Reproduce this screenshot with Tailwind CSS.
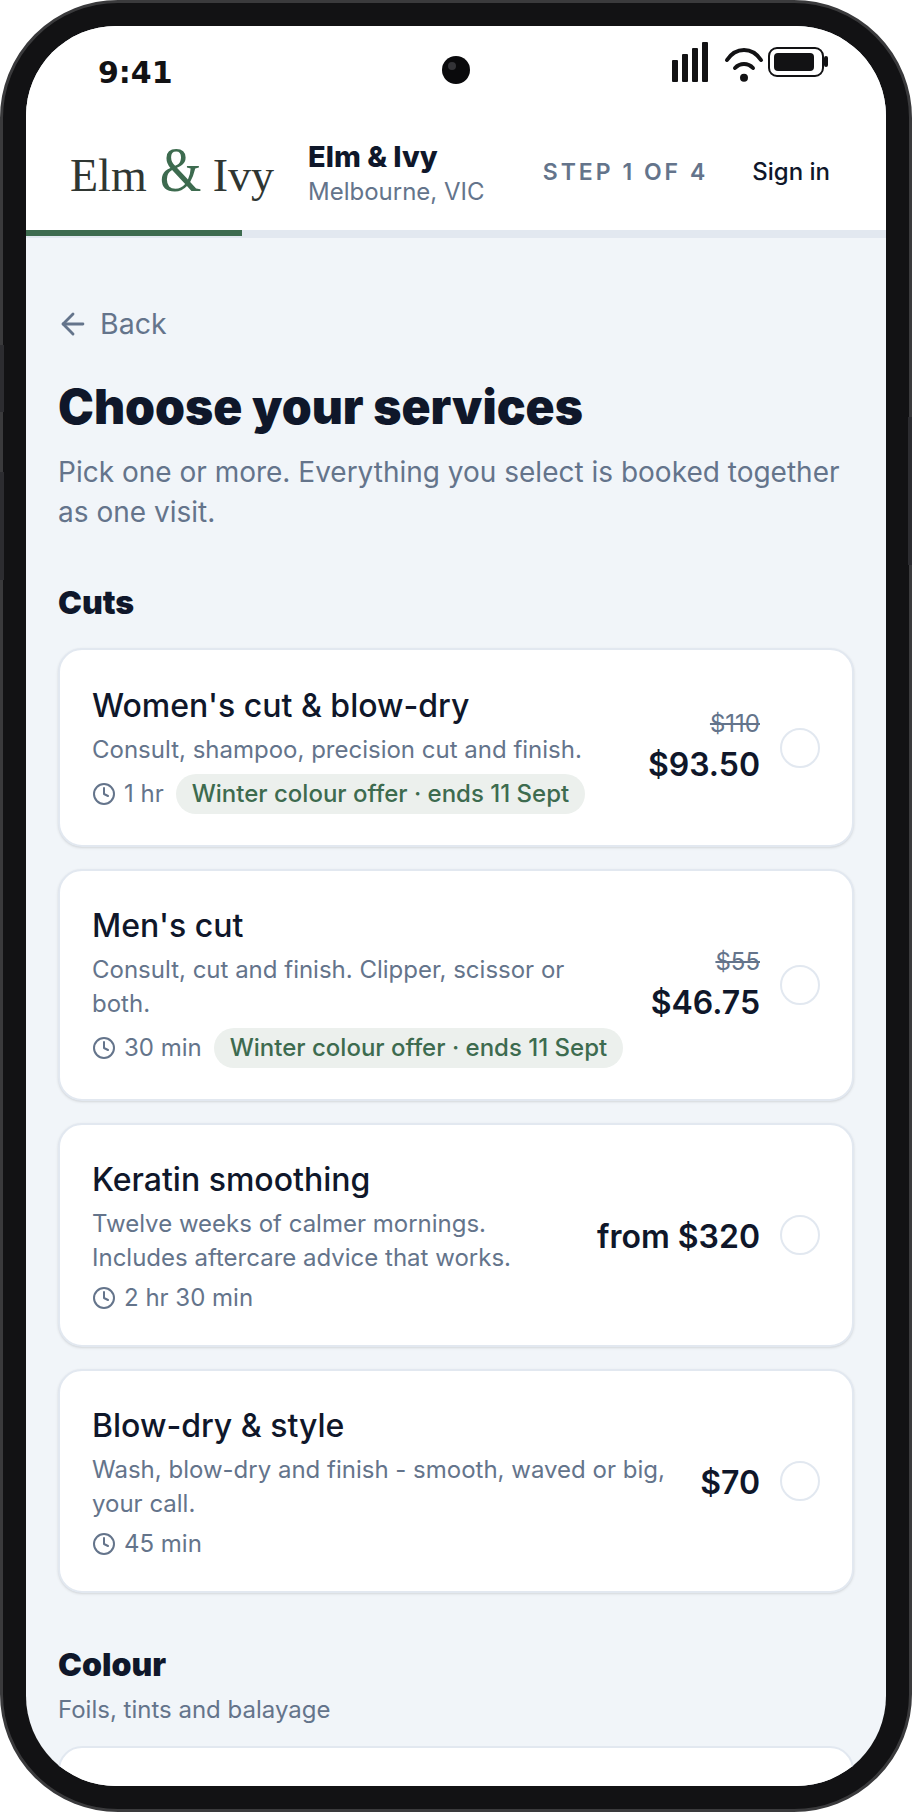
<!DOCTYPE html>
<html lang="en">
<head>
  <meta charset="UTF-8" />
  <meta name="viewport" content="width=device-width, initial-scale=1" />
  <title>Choose your services</title>
  <script src="https://cdn.jsdelivr.net/npm/@tailwindcss/browser@4"></script>
</head>
<body class="bg-white font-['Inter',sans-serif] text-[#0f172a]">
  <!-- Phone frame -->
  <div class="relative w-[912px] h-[1812px] rounded-[118px] border-[3px] border-[#3a3a3c] bg-[#121214] p-[23px]">
    <!-- Side buttons -->
    <div class="absolute -left-[3px] top-[342px] w-[4px] h-[67px] bg-[#2c2c30]"></div>
    <div class="absolute -left-[3px] top-[469px] w-[4px] h-[108px] bg-[#2c2c30]"></div>
    <div class="absolute -right-[3px] top-[414px] w-[4px] h-[148px] bg-[#2c2c30]"></div>

    <div class="w-[860px] h-[1760px] rounded-[90px] overflow-hidden bg-[#f1f5f9] flex flex-col relative">

      <!-- Status bar -->
      <div class="h-[92px] shrink-0 bg-white flex items-start justify-between pl-[72px] pr-[58px]">
        <span class="mt-[29px] font-['DejaVu_Sans',sans-serif] font-bold text-[30px] leading-[36px] text-[#121214]">9:41</span>
        <div class="flex items-start mt-[16px]">
          <svg width="36" height="40" viewBox="0 0 36 40" fill="#121214">
            <rect x="0" y="18" width="6" height="22" rx="1" /><rect x="10" y="12" width="6" height="28" rx="1" /><rect x="20" y="6" width="6" height="34" rx="1" /><rect x="30" y="0" width="6" height="40" rx="1" />
          </svg>
          <svg class="ml-[16px]" width="40" height="40" viewBox="0 0 40 40" fill="none" stroke="#121214" stroke-width="4" stroke-linecap="round">
            <path d="M3 18C12 4.7 28 4.7 37 18" /><path d="M11 26C16 20.7 24 20.7 29 26" /><circle cx="20" cy="35.7" r="4" fill="#121214" stroke="none" />
          </svg>
          <svg class="ml-[4px] mt-[5px]" width="60" height="30" viewBox="0 0 60 30">
            <rect x="1" y="1" width="54" height="28" rx="8" fill="none" stroke="#121214" stroke-width="2" />
            <rect x="6" y="6" width="40" height="18" rx="4" fill="#121214" />
            <rect x="56" y="9" width="4" height="11" rx="2" fill="#121214" />
          </svg>
        </div>
        <!-- Camera -->
        <div class="absolute left-[416px] top-[30px] w-[28px] h-[28px] rounded-full bg-[#0a0a0c]">
          <div class="absolute left-[6px] top-[6px] w-[8px] h-[8px] rounded-full bg-[#333337]"></div>
        </div>
      </div>

      <!-- Header -->
      <header class="h-[112px] shrink-0 bg-white flex items-center pl-[44px] pr-[56px]">
        <div class="w-[204px] mb-[8px] font-['Liberation_Serif',serif] text-[46px] leading-none text-[#2f3632] whitespace-nowrap">Elm <span class="inline-block -ml-[2px] -mr-[4px] scale-x-[0.85] text-[#3d6b4f] text-[63px] leading-none">&amp;</span> Ivy</div>
        <div class="ml-[34px] flex flex-col">
          <span class="font-extrabold text-[29px] leading-[34px] text-[#0f172a]">Elm &amp; Ivy</span>
          <span class="text-[24px] leading-[34px] mt-[1px] text-[#64748b]">Melbourne, VIC</span>
        </div>
        <span class="ml-auto mb-[4px] font-semibold text-[23px] tracking-[3px] text-[#64748b]">STEP 1 OF 4</span>
        <span class="ml-[44px] mb-[4px] font-medium text-[24px] text-[#0f172a]">Sign in</span>
      </header>

      <!-- Progress -->
      <div class="h-[8px] shrink-0 bg-[#e2e8f0]"><div class="h-[6px] w-[216px] bg-[#3d6b4f]"></div></div>

      <main class="flex-1 px-[32px] pt-[68px]">
        <div class="flex items-center gap-[10px] h-[36px] text-[#64748b] text-[28.5px]">
          <svg class="-ml-[2px]" width="34" height="34" viewBox="0 0 24 24" fill="none" stroke="currentColor" stroke-width="2" stroke-linecap="round" stroke-linejoin="round"><path d="M19 12H5" /><path d="M12 19l-7-7 7-7" /></svg>
          <span>Back</span>
        </div>

        <h1 class="mt-[35px] font-black text-[48px] leading-[60px] text-[#0f172a]">Choose your services</h1>
        <p class="mt-[15px] text-[28px] leading-[40px] text-[#64748b]">Pick one or more. Everything you select is booked together as one visit.</p>

        <h2 class="mt-[51px] font-black text-[32px] leading-[40px] text-[#0f172a]">Cuts</h2>

        <div class="mt-[25px] flex flex-col gap-[22px]">
          <!-- Women's cut -->
          <div class="h-[199px] bg-white rounded-[24px] border-2 border-[#e2e8f0] shadow-sm flex items-center gap-[24px] px-[32px]">
            <div class="flex-1 min-w-0 pt-[5px]">
              <h3 class="font-medium text-[32px] leading-[40px]">Women's cut &amp; blow-dry</h3>
              <p class="mt-[7px] text-[24px] leading-[34px] text-[#64748b]">Consult, shampoo, precision cut and finish.</p>
              <div class="mt-[7px] flex items-center gap-[12px] text-[24px] text-[#64748b]">
                <div class="flex items-center gap-[8px]">
                  <svg width="24" height="24" viewBox="0 0 24 24" fill="none" stroke="currentColor" stroke-width="2" stroke-linecap="round" stroke-linejoin="round"><circle cx="12" cy="12" r="10" /><path d="M12 6v6l4 2" /></svg>
                  <span>1 hr</span>
                </div>
                <span class="h-[40px] px-[16px] rounded-full bg-[#ecf0ed] text-[#3d6b4f] font-medium flex items-center whitespace-nowrap">Winter colour offer · ends 11 Sept</span>
              </div>
            </div>
            <div class="flex flex-col items-end mb-[1px] -ml-[24px]">
              <span class="text-[24px] leading-[30px] line-through text-[#64748b]">$110</span>
              <span class="mt-[6px] font-semibold text-[32px] leading-[40px]">$93.50</span>
            </div>
            <div class="-ml-[4px] w-[40px] h-[40px] rounded-full border-2 border-[#e2e8f0] shrink-0"></div>
          </div>

          <!-- Men's cut -->
          <div class="h-[232px] bg-white rounded-[24px] border-2 border-[#e2e8f0] shadow-sm flex items-center gap-[24px] px-[32px]">
            <div class="flex-1 min-w-0 pt-[3px]">
              <h3 class="font-medium text-[32px] leading-[40px]">Men's cut</h3>
              <p class="mt-[7px] text-[24px] leading-[34px] text-[#64748b]">Consult, cut and finish. Clipper, scissor or both.</p>
              <div class="mt-[7px] flex items-center gap-[12px] text-[24px] text-[#64748b]">
                <div class="flex items-center gap-[8px]">
                  <svg width="24" height="24" viewBox="0 0 24 24" fill="none" stroke="currentColor" stroke-width="2" stroke-linecap="round" stroke-linejoin="round"><circle cx="12" cy="12" r="10" /><path d="M12 6v6l4 2" /></svg>
                  <span>30 min</span>
                </div>
                <span class="h-[40px] px-[16px] rounded-full bg-[#ecf0ed] text-[#3d6b4f] font-medium flex items-center whitespace-nowrap">Winter colour offer · ends 11 Sept</span>
              </div>
            </div>
            <div class="flex flex-col items-end mb-[1px]">
              <span class="text-[24px] leading-[30px] line-through text-[#64748b]">$55</span>
              <span class="mt-[6px] font-semibold text-[32px] leading-[40px]">$46.75</span>
            </div>
            <div class="-ml-[4px] w-[40px] h-[40px] rounded-full border-2 border-[#e2e8f0] shrink-0"></div>
          </div>

          <!-- Keratin -->
          <div class="h-[224px] bg-white rounded-[24px] border-2 border-[#e2e8f0] shadow-sm flex items-center gap-[24px] px-[32px]">
            <div class="flex-1 min-w-0 pt-[3px]">
              <h3 class="font-medium text-[32px] leading-[40px]">Keratin smoothing</h3>
              <p class="mt-[7px] text-[24px] leading-[34px] text-[#64748b]">Twelve weeks of calmer mornings. Includes aftercare advice that works.</p>
              <div class="mt-[7px] flex items-center gap-[8px] h-[32px] text-[24px] text-[#64748b]">
                <svg width="24" height="24" viewBox="0 0 24 24" fill="none" stroke="currentColor" stroke-width="2" stroke-linecap="round" stroke-linejoin="round"><circle cx="12" cy="12" r="10" /><path d="M12 6v6l4 2" /></svg>
                <span>2 hr 30 min</span>
              </div>
            </div>
            <span class="-ml-[2px] mt-[3px] font-semibold text-[32px] leading-[40px]">from $320</span>
            <div class="-ml-[4px] w-[40px] h-[40px] rounded-full border-2 border-[#e2e8f0] shrink-0"></div>
          </div>

          <!-- Blow-dry -->
          <div class="h-[224px] bg-white rounded-[24px] border-2 border-[#e2e8f0] shadow-sm flex items-center gap-[24px] px-[32px]">
            <div class="flex-1 min-w-0 pt-[3px]">
              <h3 class="font-medium text-[32px] leading-[40px]">Blow-dry &amp; style</h3>
              <p class="mt-[7px] text-[24px] leading-[34px] text-[#64748b]">Wash, blow-dry and finish - smooth, waved or big, your call.</p>
              <div class="mt-[7px] flex items-center gap-[8px] h-[32px] text-[24px] text-[#64748b]">
                <svg width="24" height="24" viewBox="0 0 24 24" fill="none" stroke="currentColor" stroke-width="2" stroke-linecap="round" stroke-linejoin="round"><circle cx="12" cy="12" r="10" /><path d="M12 6v6l4 2" /></svg>
                <span>45 min</span>
              </div>
            </div>
            <span class="mt-[3px] font-semibold text-[32px] leading-[40px]">$70</span>
            <div class="-ml-[4px] w-[40px] h-[40px] rounded-full border-2 border-[#e2e8f0] shrink-0"></div>
          </div>
        </div>

        <h2 class="mt-[52px] font-black text-[32px] leading-[40px] text-[#0f172a]">Colour</h2>
        <p class="mt-[8px] text-[24px] leading-[34px] text-[#64748b]">Foils, tints and balayage</p>
        <div class="mt-[19px] h-[200px] bg-white rounded-[24px] border-2 border-[#e2e8f0]"></div>
      </main>
    </div>
  </div>
</body>
</html>
